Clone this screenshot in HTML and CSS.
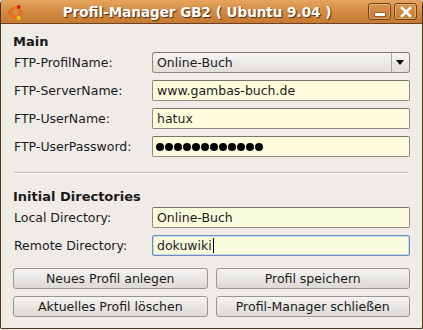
FILE: index.html
```html
<!DOCTYPE html>
<html lang="de">
<head>
    <meta charset="UTF-8">
    <title>Profil-Manager GB2</title>
    <link rel="stylesheet" href="styles.css">
</head>
<body>
    <div class="window">
        <div class="titlebar">
            <svg class="logo" width="17" height="17" viewBox="0 0 17 17">
                <g fill="none" stroke="#f06a0c" stroke-width="2.4">
                    <path d="M12.18 5.41 A4.8 4.8 0 0 1 12.18 11.59"/>
                    <path d="M9.33 13.23 A4.8 4.8 0 0 1 3.99 10.14"/>
                    <path d="M3.99 6.86 A4.8 4.8 0 0 1 9.33 3.77"/>
                </g>
                <circle cx="11.6" cy="3.1" r="2" fill="#d41c12"/>
                <circle cx="11.6" cy="13.9" r="2" fill="#f8c21a"/>
                <circle cx="2.3" cy="8.5" r="2" fill="#ee6a0a"/>
            </svg>
            <div class="title">Profil-Manager GB2 ( Ubuntu 9.04 )</div>
            <div class="winbtns">
                <div class="winbtn"><span class="min"></span></div>
                <div class="winbtn">
                    <svg width="12" height="12" viewBox="0 0 12 12"><path d="M2 2 L10 10 M10 2 L2 10" stroke="#fff" stroke-width="2.6" stroke-linecap="square"/></svg>
                </div>
            </div>
        </div>

        <div class="content">
            <div class="heading">Main</div>
            <div class="form">
                <label>FTP-ProfilName:</label>
                <div class="combo">
                    <span class="combo-text">Online-Buch</span>
                    <span class="combo-arrow"></span>
                </div>
                <label>FTP-ServerName:</label>
                <div class="input">www.gambas-buch.de</div>
                <label>FTP-UserName:</label>
                <div class="input">hatux</div>
                <label>FTP-UserPassword:</label>
                <div class="input dots">
                    <i></i><i></i><i></i><i></i><i></i><i></i><i></i><i></i><i></i><i></i><i></i><i></i>
                </div>
            </div>

            <div class="separator"></div>

            <div class="heading second">Initial Directories</div>
            <div class="form">
                <label>Local Directory:</label>
                <div class="input green">Online-Buch</div>
                <label>Remote Directory:</label>
                <div class="input green focused">dokuwiki<span class="cursor"></span></div>
            </div>

            <div class="buttons">
                <button>Neues Profil anlegen</button>
                <button>Profil speichern</button>
                <button>Aktuelles Profil löschen</button>
                <button>Profil-Manager schließen</button>
            </div>
        </div>
    </div>
</body>
</html>
```

FILE: styles.css
```css
body {
    margin: 0;
    width: 423px;
    height: 330px;
    overflow: hidden;
    background: #e9e6e2;
    font-family: "DejaVu Sans", sans-serif;
    font-size: 12.5px;
    color: #1a1a1a;
}
.window {
    box-sizing: border-box;
    height: 329px;
    background: #efebe7;
    border: 1px solid #4f3418;
    border-top: none;
    border-radius: 4px 4px 2px 2px;
    overflow: hidden;
}
.titlebar {
    height: 24px;
    display: flex;
    align-items: center;
    padding: 0 5px 0 6px;
    background: linear-gradient(#e5a560, #d38a43 50%, #c67a32);
    border-bottom: 1px solid #6b4320;
    box-sizing: border-box;
}
.logo {
    flex: none;
    width: 17px;
    height: 17px;
    margin-top: 2px;
}
.title {
    flex: 1;
    text-align: center;
    color: #fff;
    font-weight: bold;
    font-size: 13.5px;
    text-shadow: 1px 1px 1px #4a2c10;
    padding-left: 2px;
}
.winbtns {
    display: flex;
    gap: 3px;
}
.winbtn {
    width: 21px;
    height: 15px;
    border: 1px solid #6e4319;
    border-radius: 3px;
    background: linear-gradient(#d9964f, #c47a33);
    box-shadow: inset 0 0 0 1px rgba(255, 220, 170, 0.4);
    display: flex;
    align-items: center;
    justify-content: center;
}
.min {
    width: 10px;
    height: 3px;
    background: #fff;
    margin-top: 6px;
    box-shadow: 0 0 0 0.5px #6e4319;
}
.content {
    padding: 0 12px 0 12px;
}
.heading {
    font-weight: bold;
    font-size: 13px;
    margin-top: 10px;
    margin-bottom: 2px;
    line-height: 16px;
}
.heading.second {
    margin-top: 15px;
    margin-bottom: 2px;
}
.form {
    display: grid;
    grid-template-columns: 139px 1fr;
    row-gap: 7px;
    align-items: center;
}
label {
    padding-left: 1px;
}
.input, .combo {
    box-sizing: border-box;
    height: 21px;
    border: 1px solid #8e8a84;
    border-top-color: #77736d;
    border-radius: 2px;
    background: #fffddc;
    padding: 0 4px;
    display: flex;
    align-items: center;
    line-height: 19px;
}
.input.green {
    background: #f8fbdc;
}
.input.focused {
    border-color: #6b8fba;
    box-shadow: inset 0 0 0 1px #c6d7ea;
}
.cursor {
    width: 1px;
    height: 15px;
    background: #000;
    margin-left: 1px;
}
.dots {
    gap: 1px;
    padding-left: 3px;
}
.dots i {
    width: 8px;
    height: 8px;
    border-radius: 50%;
    background: #000;
}
.combo {
    padding: 0 0 0 4px;
    background: linear-gradient(#f6f5f3, #e1ded9);
    border-radius: 3px;
}
.combo-text {
    flex: 1;
}
.combo-arrow {
    width: 17px;
    height: 19px;
    border-left: 1px solid #a9a59f;
    position: relative;
}
.combo-arrow:after {
    content: "";
    position: absolute;
    left: 4px;
    top: 7px;
    border-left: 4px solid transparent;
    border-right: 4px solid transparent;
    border-top: 5px solid #000;
}
.separator {
    height: 1px;
    background: #bfbbb5;
    border-bottom: 1px solid #faf8f6;
    margin: 15px 2px 0 1px;
}
.buttons {
    display: grid;
    grid-template-columns: 1fr 1fr;
    column-gap: 8px;
    row-gap: 7px;
    margin-top: 12px;
}
button {
    height: 21px;
    font-family: "DejaVu Sans", sans-serif;
    font-size: 12.5px;
    color: #1a1a1a;
    border: 1px solid #99958f;
    border-radius: 3px;
    background: linear-gradient(#f4f3f1, #dddad5);
    padding: 0;
}
```
